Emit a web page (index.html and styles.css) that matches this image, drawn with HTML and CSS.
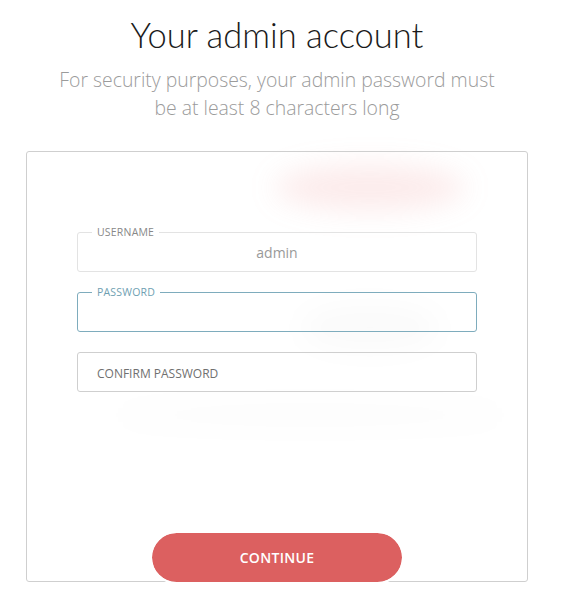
FILE: index.html
```html
<!DOCTYPE html>
<html lang="en">
<head>
<meta charset="utf-8">
<title>Your admin account</title>
<link rel="stylesheet" href="styles.css">
</head>
<body>
<div class="page">
  <div class="blob blob-pink"></div>
  <div class="blob blob-grey1"></div>
  <div class="blob blob-grey2"></div>
  <header class="intro">
    <h1 class="title">Your admin account</h1>
    <p class="subtitle">For security purposes, your admin password must<br>be at least 8 characters long</p>
  </header>
  <form class="card">
    <div class="fields">
      <fieldset class="field">
        <legend class="field-label">USERNAME</legend>
        <input class="field-input field-input--center" type="text" value="admin" readonly>
      </fieldset>
      <fieldset class="field field--focus">
        <legend class="field-label">PASSWORD</legend>
        <input class="field-input" type="password">
      </fieldset>
      <fieldset class="field field--plain">
        <input class="field-input" type="password" placeholder="CONFIRM PASSWORD">
      </fieldset>
    </div>
    <div class="actions">
      <button class="btn" type="button">CONTINUE</button>
    </div>
  </form>
</div>
</body>
</html>
```
FILE: styles.css
```css
html, body {
  margin: 0;
  padding: 0;
  background: #ffffff;
}
body {
  font-family: "Open Sans", "Noto Sans", sans-serif;
  color: #222;
  overflow: hidden;
}
.page {
  position: relative;
  width: 502px;
  padding-left: 26px;
  padding-top: 10px;
}
.blob {
  position: absolute;
  border-radius: 50%;
  filter: blur(14px);
  z-index: 0;
}
.blob-pink {
  left: 275px;
  top: 165px;
  width: 190px;
  height: 45px;
  background: rgba(235, 130, 130, 0.16);
}
.blob-grey1 {
  left: 300px;
  top: 305px;
  width: 140px;
  height: 45px;
  background: rgba(0, 0, 0, 0.02);
}
.blob-grey2 {
  left: 110px;
  top: 402px;
  width: 400px;
  height: 26px;
  background: rgba(0, 0, 0, 0.012);
}
.intro {
  position: relative;
  z-index: 1;
  text-align: center;
}
.title {
  margin: 0;
  font-family: "Lato", "Open Sans", sans-serif;
  font-weight: 300;
  font-size: 34.5px;
  line-height: 50px;
  color: #1b1b1b;
}
.subtitle {
  margin: 6px 0 0;
  font-family: "Open Sans", sans-serif;
  font-weight: 300;
  font-size: 19.4px;
  line-height: 28px;
  color: #9b9b9b;
}
.card {
  position: relative;
  z-index: 1;
  margin-top: 29px;
  width: 500px;
  height: 429px;
  border: 1px solid #cfcfcf;
  border-radius: 3px;
  box-sizing: content-box;
  display: flex;
  flex-direction: column;
  justify-content: space-between;
  background: transparent;
}
.fields {
  display: flex;
  flex-direction: column;
  gap: 14px;
  padding: 74px 50px 0;
}
.field {
  margin: 0;
  padding: 0 19px;
  height: 44px;
  border: 1px solid #e3e3e3;
  border-radius: 3px;
  min-width: 0;
  display: block;
}
.field--focus {
  border-color: #7eacbd;
}
.field--focus .field-label {
  color: #6f9fb2;
}
.field--plain {
  margin-top: 6px;
  height: 38px;
  border-color: #cfcfcf;
}
.field-label {
  padding: 0 5px;
  margin-left: -5px;
  font-size: 10.5px;
  line-height: 12px;
  color: #888;
  letter-spacing: 0.2px;
}
.field-input {
  display: block;
  width: 100%;
  height: 28px;
  border: 0;
  padding: 0;
  margin: 0;
  outline: none;
  background: transparent;
  font-family: "Open Sans", sans-serif;
  font-size: 14px;
  color: #999;
}
.field--plain .field-input {
  height: 38px;
}
.field-input--center {
  text-align: center;
}
.field-input::placeholder {
  color: #707070;
  font-size: 12px;
}
.actions {
  display: flex;
  justify-content: center;
  margin-bottom: -3px;
}
.btn {
  width: 254px;
  height: 53px;
  border: 2px solid #ffffff;
  border-radius: 27px;
  background: #dc6060;
  background-clip: padding-box;
  color: #ffffff;
  font-family: "Open Sans", sans-serif;
  font-weight: 600;
  font-size: 14px;
  letter-spacing: 0.3px;
  cursor: pointer;
}
```
